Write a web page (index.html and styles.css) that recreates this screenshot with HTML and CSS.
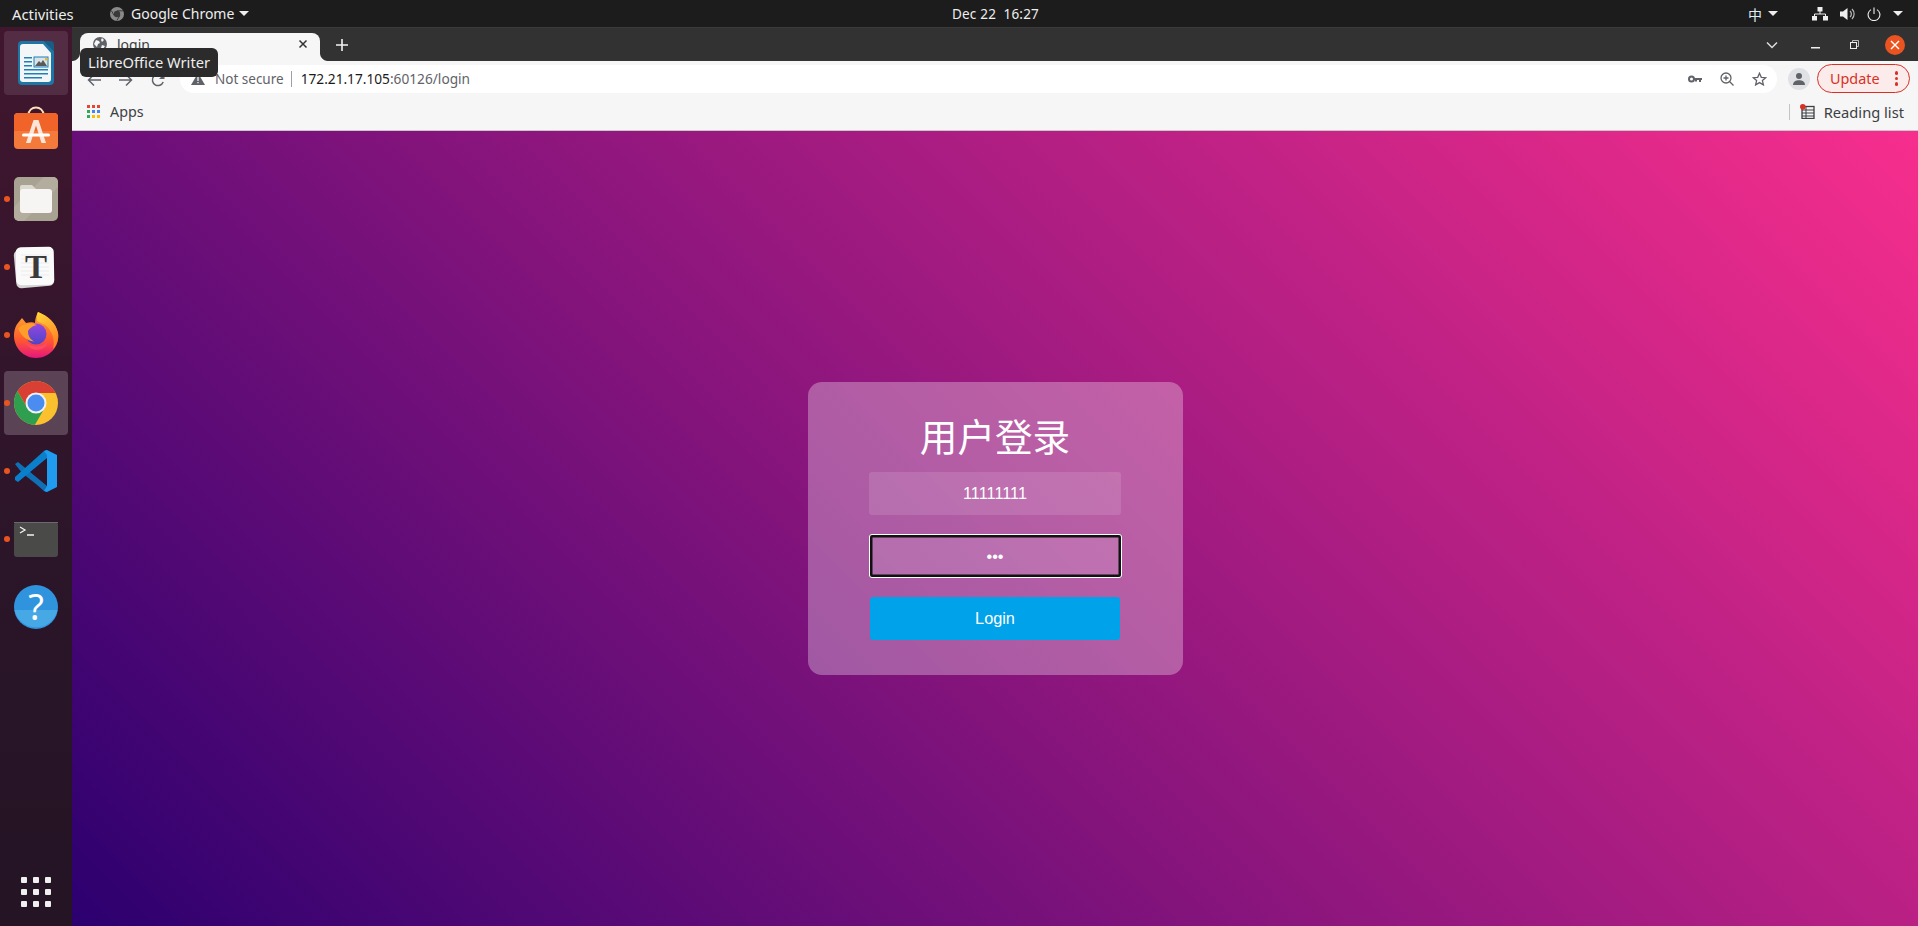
FILE: index.html
```html
<!DOCTYPE html>
<html lang="en">
<head>
<meta charset="utf-8">
<title>login</title>
<link rel="stylesheet" href="styles.css">
</head>
<body>
<header class="topbar">
  <span class="activities">Activities</span>
  <span class="app-menu">
    <svg class="app-glyph" width="14" height="14" viewBox="0 0 14 14"><circle cx="7" cy="7" r="7" fill="#8a8a8a"/><circle cx="7" cy="7" r="3.2" fill="#3a3a3a"/><path d="M7 3.8h6M4.2 8.6L1.4 3.6M9.8 8.6l-3 5" stroke="#3a3a3a" stroke-width="1"/></svg>
    <span>Google Chrome</span><i class="caret app-caret"></i>
  </span>
  <span class="clock">Dec 22&nbsp;&nbsp;16:27</span>
  <span class="tray">
    <span class="ime">中</span><i class="caret ime-caret"></i>
    <svg class="tray-net" width="16" height="14" viewBox="0 0 16 14"><path d="M5.5 0h5v4.500h-5zM0 9h5v4.500H0zM11 9h5v4.500h-5z" fill="#eee"/><path d="M8 4v3M2.500 9V7h11v2" stroke="#eee" fill="none"/></svg>
    <svg class="tray-vol" width="16" height="14" viewBox="0 0 16 14"><path d="M0 4.500h3L7.500 1v12L3 9.500H0z" fill="#eee"/><path d="M10 4a4 4 0 0 1 0 6M12 2a7 7 0 0 1 0 10" stroke="#bbb" fill="none" stroke-width="1.200"/></svg>
    <svg class="tray-pow" width="14" height="14" viewBox="0 0 14 14"><path d="M4 2.600a5.900 5.900 0 1 0 6 0M7 .5v6.500" stroke="#eee" fill="none" stroke-width="1.100"/></svg>
    <i class="caret pow-caret"></i>
  </span>
</header>

<div class="desktop">
  <nav class="dock">
    <div class="dock-item active">
      <svg width="64" height="64" viewBox="0 0 64 64">
        <path d="M18 10h22l10 10v30a4 4 0 0 1-4 4H18a4 4 0 0 1-4-4V14a4 4 0 0 1 4-4z" fill="#1c76a6"/>
        <path d="M40 10h6a4 4 0 0 1 4 4v6z" fill="#175d86"/>
        <path d="M19 13h20l8 9v26a3 3 0 0 1-3 3H19a3 3 0 0 1-3-3V16a3 3 0 0 1 3-3z" fill="#f3f5f6"/>
        <path d="M20 26h8v1.500h-8zM20 30h8v1.500h-8zM20 34h8v1.500h-8zM20 38h24v1.500H20zM20 42h24v1.500H20zM20 46h18v1.500H20z" fill="#1c80bd"/>
        <rect x="30" y="26" width="14" height="10" fill="#d9e3e8" stroke="#1c80bd"/>
        <path d="M31 35l4-5 2 2 2-3 4 6z" fill="#5a5a5a"/><rect x="41" y="27" width="2.500" height="2.500" fill="#e8b92f"/>
      </svg>
    </div>
    <div class="dock-item">
      <svg width="64" height="64" viewBox="0 0 64 64">
        <path d="M24.500 16c0-10 15-10 15 0" fill="none" stroke="#ffe0b8" stroke-width="2"/>
        <rect x="10" y="14" width="44" height="36" rx="4" fill="#f47a3c"/>
        <path d="M10 18a4 4 0 0 1 4-4h36a4 4 0 0 1 4 4v14H10z" fill="#f0642a"/>
        <path d="M29.500 21h5l7.500 23h-4.500L32 26.500 26.500 44H22z" fill="#fbe5d8"/>
        <rect x="18" y="34.500" width="28" height="3" rx="1.500" fill="#fff"/>
      </svg>
    </div>
    <div class="dock-item running">
      <svg width="64" height="64" viewBox="0 0 64 64">
        <rect x="10" y="10" width="44" height="44" rx="5" fill="#a8a292"/>
        <path d="M10 40L40 10h9a5 5 0 0 1 5 5v5L20 54h-5a5 5 0 0 1-5-5z" fill="#b3ad9e"/>
        <path d="M18 18h10l4 4v2H16v-4a2 2 0 0 1 2-2z" fill="#dcd9d0"/>
        <rect x="16" y="22" width="32" height="24" rx="3" fill="#f6f5f3"/>
      </svg>
    </div>
    <div class="dock-item running">
      <svg width="64" height="64" viewBox="0 0 64 64">
        <rect x="11" y="14" width="38" height="38" rx="5" fill="#d4d4d4" transform="rotate(-5 30 33)"/>
        <rect x="12" y="12" width="38" height="38" rx="5" fill="#fafafa" transform="rotate(-1 31 31)"/>
        <path d="M17 20h28M17 24h28M17 28h28M17 32h28M17 36h28M17 40h28" stroke="#ececec"/>
        <text x="32" y="43" class="t-glyph" text-anchor="middle">T</text>
      </svg>
    </div>
    <div class="dock-item running">
      <svg width="64" height="64" viewBox="0 0 64 64">
        <defs>
          <linearGradient id="fx" x1="0" y1="0" x2="0" y2="1"><stop offset="0" stop-color="#ffb02e"/><stop offset=".6" stop-color="#ff5a2e"/><stop offset="1" stop-color="#e8157e"/></linearGradient>
          <linearGradient id="fl" x1="0" y1="0" x2="0.500" y2="1"><stop offset="0" stop-color="#ffd83a"/><stop offset="1" stop-color="#ff8426"/></linearGradient>
          <linearGradient id="fg" x1="0.500" y1="0" x2="0.500" y2="1"><stop offset="0" stop-color="#9548e0"/><stop offset="1" stop-color="#4f43c8"/></linearGradient>
        </defs>
        <path d="M34 9C44 13 52 20 54 30 56 44 45 55 32 55 19 55 10 44 10 33 10 27 12 22 14 20L18 15 22 20C26 19 29 19 31 20 31 15 33 11 34 9z" fill="url(#fx)"/>
        <circle cx="32" cy="31" r="10.500" fill="url(#fg)"/>
        <path d="M34 9C44 13 52 20 54 30 55 36 53 42 49 46 51 38 49 31 45 26 42 21 36 20 33 18 33 14 33 11 34 9z" fill="url(#fl)"/>
        <path d="M14 25C20 20 28 20 33 22 28 23 25 26 24 28 24 33 26 36 30 38.500 23 38 17 33 14 25z" fill="#ff9d2b"/>
        <path d="M21 39C26 44 38 46 44 38 42 49 27 50 21 39z" fill="#ff4a66"/>
      </svg>
    </div>
    <div class="dock-item running focused">
      <svg width="64" height="64" viewBox="0 0 64 64">
        <defs><clipPath id="cc"><circle cx="32" cy="32" r="22"/></clipPath></defs>
        <g clip-path="url(#cc)">
          <rect x="8" y="8" width="48" height="48" fill="#fbc02d"/>
          <path d="M32 22H64V-4L0-3 23.340 37z" fill="#d93f33"/>
          <path d="M23.340 37L0-3V64H25L40.660 37z" fill="#2e9e4f"/>
        </g>
        <circle cx="32" cy="32" r="10.500" fill="#f1f1f1"/><circle cx="32" cy="32" r="8.500" fill="#4a8cf0"/>
      </svg>
    </div>
    <div class="dock-item running">
      <svg width="64" height="64" viewBox="0 0 64 64">
        <path d="M11 25l3-2 29 24v6l-3-1-8-7-14-11z" fill="#0f70b5"/>
        <path d="M43 11v8L14 43l-3-2V38L40 12z" fill="#0a80cc"/>
        <path d="M40 12l3-1 10 5v32l-10 5-3-1 3-5V16z" fill="#1f9cf0"/>
      </svg>
    </div>
    <div class="dock-item running">
      <svg width="64" height="64" viewBox="0 0 64 64">
        <rect x="10" y="15" width="44" height="35" rx="3" fill="#4a4a48"/>
        <rect x="10" y="15" width="44" height="1" fill="#6a6a68"/>
        <path d="M16 20l5 3-5 3M23 28h7" stroke="#f2f2f2" stroke-width="1.300" fill="none"/>
      </svg>
    </div>
    <div class="dock-item">
      <svg width="64" height="64" viewBox="0 0 64 64">
        <circle cx="32" cy="32" r="22" fill="#2f93dd"/>
        <path d="M10.500 35h43A22 22 0 0 1 10.500 35z" fill="#47a8e6"/>
        <text x="32" y="45" class="q-glyph" text-anchor="middle">?</text>
      </svg>
    </div>
    <div class="dock-apps">
      <span></span><span></span><span></span><span></span><span></span><span></span><span></span><span></span><span></span>
    </div>
  </nav>

  <main class="browser">
    <div class="tabstrip">
      <div class="tab">
        <svg width="14" height="14" viewBox="0 0 14 14"><circle cx="7" cy="7" r="7" fill="#5f6368"/><path d="M3 3l3 1 1 2-2 1-1 3-3-3zM9 1l2 2-2 2-1-2zM9 8l3 1-2 3-2-1z" fill="#f6f6f6"/></svg>
        <span class="tab-title">login</span>
        <svg class="tab-close" width="10" height="10" viewBox="0 0 10 10"><path d="M1.500 1.500l7 7M8.500 1.500l-7 7" stroke="#333" stroke-width="1.500"/></svg>
      </div>
      <svg class="newtab" width="12" height="12" viewBox="0 0 12 12"><path d="M6 0v12M0 6h12" stroke="#f2f2f2" stroke-width="1.600"/></svg>
      <svg class="tab-list" width="12" height="8" viewBox="0 0 12 8"><path d="M1 1.500l5 5 5-5" stroke="#ddd" stroke-width="1.500" fill="none"/></svg>
      <svg class="win-min" width="9" height="2" viewBox="0 0 9 2"><rect width="9" height="1.500" fill="#eee"/></svg>
      <svg class="win-max" width="9" height="9" viewBox="0 0 9 9"><path d="M2.500 2V.5h6v6H7" stroke="#bbb" fill="none"/><rect x=".5" y="2.500" width="6" height="6" stroke="#eee" fill="none"/></svg>
      <span class="win-close"><svg width="10" height="10" viewBox="0 0 10 10"><path d="M1 1l8 8M9 1L1 9" stroke="#fff" stroke-width="1.400"/></svg></span>
    </div>

    <div class="toolbar">
      <svg class="nav nav-back" width="14" height="14" viewBox="0 0 14 14"><path d="M14 7H1.500M7 1.500L1.500 7 7 12.500" stroke="#5f6368" stroke-width="1.500" fill="none"/></svg>
      <svg class="nav nav-fwd" width="14" height="14" viewBox="0 0 14 14"><path d="M0 7h12.500M7 1.500L12.500 7 7 12.500" stroke="#5f6368" stroke-width="1.500" fill="none"/></svg>
      <svg class="nav nav-reload" width="14" height="14" viewBox="0 0 14 14"><path d="M12.200 9A5.600 5.600 0 1 1 11 3" stroke="#5f6368" stroke-width="1.500" fill="none"/><path d="M13.500 0.500V6H8z" fill="#5f6368"/></svg>
      <div class="omnibox">
        <svg class="warn" width="14" height="12" viewBox="0 0 14 12"><path d="M7 0l7 12H0z" fill="#5f6368"/><path d="M6.400 4h1.200v4H6.400zM6.400 9h1.200v1.200H6.400z" fill="#fff"/></svg>
        <span class="insecure">Not secure</span>
        <i class="omni-sep"></i>
        <span class="url"><b>172.21.17.105</b>:60126/login</span>
        <svg class="om-key" width="14" height="8" viewBox="0 0 14 8"><circle cx="3.500" cy="4" r="2.500" fill="none" stroke="#5f6368" stroke-width="2"/><path d="M6 3h8v2h-1v2h-2V5H9v1.500H7V5H6z" fill="#5f6368"/></svg>
        <svg class="om-zoom" width="14" height="14" viewBox="0 0 14 14"><circle cx="6" cy="6" r="5" stroke="#5f6368" stroke-width="1.300" fill="none"/><path d="M9.500 9.500L13.500 13.500M3.500 6h5M6 3.500v5" stroke="#5f6368" stroke-width="1.300"/></svg>
        <svg class="om-star" width="15" height="14" viewBox="0 0 15 14"><path d="M7.500 1.200l1.800 4.100 4.400.4-3.300 2.900 1 4.300-3.900-2.300-3.900 2.300 1-4.300L1.300 5.700l4.400-.4z" fill="none" stroke="#5f6368" stroke-width="1.300"/></svg>
      </div>
      <span class="avatar"><svg width="14" height="14" viewBox="0 0 14 14"><circle cx="7" cy="4" r="3" fill="#5f6368"/><path d="M1 13c0-3.500 3-4.800 6-4.800s6 1.300 6 4.800z" fill="#5f6368"/></svg></span>
      <span class="update"><span>Update</span><i class="dots"><u></u><u></u><u></u></i></span>
    </div>

    <div class="bookmarks">
      <svg class="apps-grid" width="13" height="13" viewBox="0 0 13 13">
        <rect width="3" height="3" fill="#ea4335"/><rect x="5" width="3" height="3" fill="#ea4335"/><rect x="10" width="3" height="3" fill="#ea4335"/>
        <rect y="5" width="3" height="3" fill="#34a853"/><rect x="5" y="5" width="3" height="3" fill="#4285f4"/><rect x="10" y="5" width="3" height="3" fill="#4285f4"/>
        <rect y="10" width="3" height="3" fill="#34a853"/><rect x="5" y="10" width="3" height="3" fill="#fbbc04"/><rect x="10" y="10" width="3" height="3" fill="#fbbc04"/>
      </svg>
      <span class="apps-label">Apps</span>
      <i class="bm-sep"></i>
      <svg class="rl-icon" width="15" height="15" viewBox="0 0 15 15"><rect x="2" y="2.500" width="12" height="12" fill="none" stroke="#3c4043" stroke-width="1.300"/><path d="M2 6h12M2 9h12M2 12h12M6 3v11" stroke="#3c4043"/><circle cx="2.800" cy="2.800" r="2.800" fill="#d93025"/></svg>
      <span class="rl-label">Reading list</span>
    </div>

    <section class="page">
      <form class="card">
        <h1 class="card-title">用户登录</h1>
        <input class="field" type="text" value="11111111" aria-label="username">
        <input class="field field-focus" type="password" value="111" aria-label="password">
        <button class="login" type="button">Login</button>
      </form>
    </section>
  </main>
</div>

<div class="tooltip">LibreOffice Writer</div>
</body>
</html>
```

FILE: styles.css
```css
* { box-sizing: border-box; }
html, body { height: 100%; }
body {
  margin: 0;
  height: 926px;
  width: 1918px;
  overflow: hidden;
  display: flex;
  flex-direction: column;
  font-family: "Noto Sans", "Noto Sans CJK SC", sans-serif;
  position: relative;
  background: #1c1c1c;
}

/* top bar */
.topbar {
  height: 27px;
  flex: none;
  background: #1c1c1c;
  color: #eee;
  font-size: 14px;
  display: flex;
  align-items: center;
  padding-left: 12px;
  position: relative;
}
.activities { width: 98px; font-size: 14.8px; }
.app-menu { display: flex; align-items: center; }
.app-glyph { margin-right: 7px; }
.caret {
  display: block;
  width: 0; height: 0;
  border-left: 5px solid transparent;
  border-right: 5px solid transparent;
  border-top: 5px solid #eee;
}
.app-caret { margin-left: 5px; }
.clock {
  position: absolute;
  left: 952px;
  font-size: 13.5px;
  letter-spacing: .2px;
}
.tray { margin-left: auto; display: flex; align-items: center; padding-right: 15px; }
.ime { font-family: "Noto Sans CJK SC", sans-serif; font-size: 14px; color: #dfe8f5; }
.ime-caret { margin-left: 6px; }
.tray-net { margin-left: 34px; }
.tray-vol { margin-left: 12px; }
.tray-pow { margin-left: 11px; }
.pow-caret { margin-left: 12px; }

/* layout */
.desktop { flex: 1; display: flex; min-height: 0; }

/* dock */
.dock {
  width: 72px;
  flex: none;
  padding: 4px;
  display: flex;
  flex-direction: column;
  gap: 4px;
  background: linear-gradient(180deg, #41162f 0%, #2b1529 60%, #241424 100%);
}
.dock-item {
  width: 64px;
  height: 64px;
  flex: none;
  border-radius: 4px;
  position: relative;
}
.dock-item svg { display: block; }
.dock-item.active { background: rgba(255,255,255,.1); }
.dock-item.focused { background: rgba(255,255,255,.2); }
.dock-item.running::before {
  content: "";
  position: absolute;
  left: 0;
  top: 29px;
  width: 6px;
  height: 6px;
  border-radius: 50%;
  background: #e95420;
}
.t-glyph { font: bold 33px "Liberation Serif", serif; fill: #3a3a3a; }
.q-glyph { font: 400 36px "Noto Sans", sans-serif; fill: #fff; }
.dock-apps {
  margin: auto 0 15px 17px;
  width: 30px;
  display: grid;
  grid-template-columns: repeat(3, 6px);
  grid-auto-rows: 6px;
  gap: 6px;
}
.dock-apps span { background: #f0f0f0; border-radius: 1px; }

/* browser */
.browser { flex: 1; min-width: 0; display: flex; flex-direction: column; }
.tabstrip {
  height: 34px;
  flex: none;
  background: #333232;
  display: flex;
  align-items: center;
  padding-left: 8px;
  border-top: 1px solid #3a3a3a;
}
.tab {
  width: 240px;
  height: 28px;
  margin-top: 5px;
  align-self: flex-start;
  background: #f6f6f6;
  border-radius: 8px 8px 0 0;
  display: flex;
  align-items: center;
  padding: 0 12px 6px 13px;
  color: #3c4043;
  font-size: 14px;
  position: relative;
}
.tab::after, .tab::before {
  content: "";
  position: absolute;
  bottom: 0;
  width: 8px;
  height: 8px;
}
.tab::after { right: -8px; background: radial-gradient(circle at 100% 0, #333232 7.500px, #f6f6f6 8.500px); }
.tab::before { left: -8px; background: radial-gradient(circle at 0 0, #333232 7.500px, #f6f6f6 8.500px); }
.tab-title { margin-left: 10px; }
.tab-close { margin-left: auto; }
.newtab { margin-left: 16px; }
.tab-list { margin-left: auto; margin-right: 4px; }
.win-min { margin-left: 29px; margin-top: 7px; }
.win-max { margin-left: 30px; }
.win-close {
  margin-left: 26px;
  margin-right: 13px;
  width: 20px; height: 20px;
  border-radius: 50%;
  background: #e95420;
  display: flex;
  align-items: center;
  justify-content: center;
}

.toolbar {
  height: 36px;
  flex: none;
  background: #f6f6f6;
  display: flex;
  align-items: center;
  padding-left: 15px;
  padding-bottom: 1px;
}
.nav { margin-top: 3px; }
.nav-fwd { margin-left: 18px; }
.nav-reload { margin-left: 18px; }
.omnibox {
  width: 1597px;
  height: 28px;
  margin-left: 15px;
  background: #fff;
  border-radius: 14px;
  display: flex;
  align-items: center;
  padding-left: 11px;
  padding-right: 9px;
  font-size: 13.5px;
  color: #5f6368;
}
.insecure { margin-left: 10px; }
.omni-sep { width: 1px; height: 16px; background: #9aa0a6; margin-left: 7px; }
.url { margin-left: 9px; font-size: 13.7px; }
.url b { font-weight: 400; color: #1a1a1a; }
.om-key { margin-left: auto; }
.om-zoom { margin-left: 18px; }
.om-star { margin-left: 18px; margin-right: 1px; }
.avatar {
  width: 22px; height: 22px;
  margin-left: 11px;
  border-radius: 50%;
  background: #dfe1e5;
  display: flex;
  align-items: center;
  justify-content: center;
}
.update {
  width: 93px;
  height: 29px;
  margin-left: 7px;
  border: 1px solid #d93025;
  border-radius: 15px;
  background: #fbeceb;
  color: #d93025;
  font-size: 14.4px;
  display: flex;
  align-items: center;
  padding-left: 12px;
}
.dots { margin-left: auto; margin-right: 11px; display: flex; flex-direction: column; gap: 2px; }
.dots u { display: block; width: 3.5px; height: 3.5px; border-radius: 50%; background: #d93025; }

.bookmarks {
  height: 34px;
  flex: none;
  background: #f6f6f6;
  border-bottom: 1px solid #c8c8c8;
  display: flex;
  align-items: center;
  padding: 0 14px 4px 15px;
  color: #3c4043;
  font-size: 14px;
}
.apps-label { margin-left: 10px; font-size: 14.3px; }
.bm-sep { margin-left: auto; width: 1px; height: 16px; background: #c4c4c4; }
.rl-icon { margin-left: 10px; }
.rl-label { margin-left: 9px; font-size: 14.7px; }

/* login page */
.page {
  flex: 1;
  min-height: 0;
  display: flex;
  align-items: center;
  justify-content: center;
  background: linear-gradient(45deg, #2c006f 0%, #f72e8d 100%);
}
.card {
  width: 375px;
  height: 293px;
  padding-top: 90px;
  position: relative;
  border-radius: 14px;
  background: rgba(255,255,255,.3);
  display: flex;
  flex-direction: column;
  align-items: center;
}
.card-title {
  position: absolute;
  top: 26px;
  left: 0;
  right: 0;
  margin: 0;
  text-align: center;
  font: 400 37.600px/53px "Noto Sans CJK SC", sans-serif;
  color: #fff;
}
.field {
  width: 252px;
  height: 43px;
  flex: none;
  border: 0;
  border-radius: 3px;
  padding: 0;
  background: rgba(255,255,255,.12);
  color: #fff;
  text-align: center;
  font: 16.300px "Liberation Sans", sans-serif;
  outline: none;
}
.field-focus {
  width: 253px;
  height: 44px;
  align-self: flex-start;
  margin: 19px 0 -1px 61px;
  box-shadow: inset 0 0 0 1px #fff, inset 0 0 0 3.500px #111;
}
.login {
  width: 250px;
  height: 43px;
  flex: none;
  margin-top: 20px;
  border: 0;
  border-radius: 3px;
  background: #00a2ea;
  color: #fff;
  font: 16.300px "Liberation Sans", sans-serif;
}

/* tooltip */
.tooltip {
  position: absolute;
  left: 80px;
  top: 48px;
  height: 29px;
  width: 138px;
  border-radius: 6px;
  background: #2b2b2b;
  color: #eee;
  font-size: 14.7px;
  line-height: 29px;
  text-align: center;
  white-space: nowrap;
}
```
